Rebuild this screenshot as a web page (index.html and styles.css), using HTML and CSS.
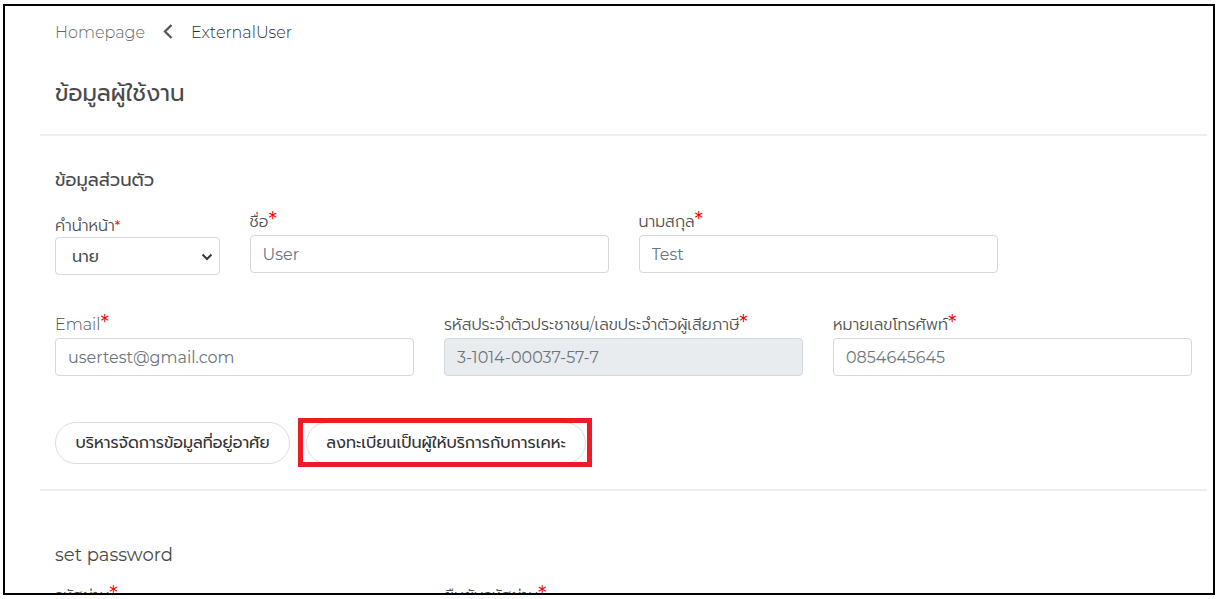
FILE: index.html
```html
<!DOCTYPE html>
<html lang="th">
<head>
<meta charset="utf-8">
<meta name="viewport" content="width=device-width, initial-scale=1">
<title>ExternalUser</title>
<link rel="stylesheet" href="styles.css">
</head>
<body>
<main class="frame">
  <nav class="breadcrumb" aria-label="Breadcrumb">
    <a class="crumb" href="#">Homepage</a>
    <svg class="crumb-arrow" viewBox="0 0 10 16" aria-hidden="true"><path d="M8.500 1 2 7.500l6.500 6.500"/></svg>
    <a class="crumb crumb-current" href="#" aria-current="page">ExternalUser</a>
  </nav>
  <h1 class="page-title">ข้อมูลผู้ใช้งาน</h1>
  <hr class="divider">
  <form class="form">
    <h2 class="section-title">ข้อมูลส่วนตัว</h2>
    <div class="row row-names">
      <div class="field field-small">
        <label class="label label-select" for="prefix">คำนำหน้า<span class="star star-small">*</span></label>
        <div class="select-box">
          <select class="control select" id="prefix"><option>นาย</option></select>
          <svg class="select-arrow" viewBox="0 0 12 8" aria-hidden="true"><path d="M1.500 1.500 6 6l4.500-4.500"/></svg>
        </div>
      </div>
      <div class="field">
        <label class="label" for="first">ชื่อ<span class="star">*</span></label>
        <input class="control" id="first" type="text" value="User">
      </div>
      <div class="field">
        <label class="label" for="last">นามสกุล<span class="star">*</span></label>
        <input class="control" id="last" type="text" value="Test">
      </div>
    </div>
    <div class="row row-contact">
      <div class="field">
        <label class="label" for="email">Email<span class="star">*</span></label>
        <input class="control" id="email" type="email" value="usertest@gmail.com">
      </div>
      <div class="field">
        <label class="label" for="card">รหัสประจำตัวประชาชน/เลขประจำตัวผู้เสียภาษี<span class="star">*</span></label>
        <input class="control" id="card" type="text" value="3-1014-00037-57-7" disabled>
      </div>
      <div class="field">
        <label class="label" for="phone">หมายเลขโทรศัพท์<span class="star">*</span></label>
        <input class="control" id="phone" type="tel" value="0854645645">
      </div>
    </div>
    <div class="actions">
      <button class="pill" type="button">บริหารจัดการข้อมูลที่อยู่อาศัย</button>
      <div class="marked">
        <button class="pill pill-wide" type="button">ลงทะเบียนเป็นผู้ให้บริการกับการเคหะ</button>
      </div>
    </div>
  </form>
  <hr class="divider">
  <form class="form">
    <h2 class="section-title section-password">set password</h2>
    <div class="row">
      <div class="field">
        <label class="label" for="password">รหัสผ่าน<span class="star">*</span></label>
        <input class="control" id="password" type="password">
      </div>
      <div class="field">
        <label class="label" for="confirm">ยืนยันรหัสผ่าน<span class="star">*</span></label>
        <input class="control" id="confirm" type="password">
      </div>
    </div>
  </form>
</main>
</body>
</html>
```
FILE: styles.css
```css
* {
  box-sizing: border-box;
}

body {
  margin: 0;
  padding: 4px 5px 4px 3px;
  height: 100vh;
  overflow: hidden;
  background: #fff;
  color: #555;
  font-family: Montserrat, Prompt, Inter, "Noto Sans Thai", "Noto Sans", sans-serif;
  font-size: 16px;
}

.frame {
  height: 100%;
  overflow: hidden;
  border: 2px solid #000;
  padding: 16px 6px 0 35px;
}

.breadcrumb {
  display: flex;
  align-items: center;
  height: 20px;
  padding-left: 15px;
}

.crumb {
  color: #666;
  font-size: 16px;
  font-weight: 300;
  text-decoration: none;
}

.crumb-current {
  color: #1f3044;
}

.crumb-arrow {
  width: 10px;
  height: 16px;
  margin: 0 18px;
  fill: none;
  stroke: #555;
  stroke-width: 2.3;
}

.page-title {
  margin: 32px 0 22px;
  padding-left: 15px;
  color: #4a4a4a;
  font-size: 23px;
  font-weight: 400;
  line-height: 38px;
}

.divider {
  height: 2px;
  margin: 0;
  border: 0;
  background: #eee;
}

.form {
  padding: 0 15px;
}

.section-title {
  margin: 32px 0 0;
  color: #4a4a4a;
  font-size: 18px;
  font-weight: 400;
  line-height: 24px;
}

.section-password {
  margin-top: 52px;
  margin-bottom: 18px;
}

.row {
  display: grid;
  grid-template-columns: repeat(12, minmax(0, 1fr));
  column-gap: 30px;
}

.row-names {
  margin-top: 19px;
}

.row-contact {
  margin-top: 39px;
}

.field {
  grid-column: span 4;
  display: flex;
  flex-direction: column;
}

.field-small {
  grid-column: span 2;
  padding-top: 2px;
}

.label {
  display: flex;
  height: 24px;
  color: #505050;
  font-size: 16px;
  font-weight: 300;
  line-height: 22px;
  white-space: nowrap;
}

.label-select {
  line-height: 26px;
}

.star {
  color: #f00;
  font-size: 22px;
  font-weight: 400;
  line-height: 20px;
}

.star-small {
  font-size: 14px;
  line-height: 26px;
}

.control {
  width: 100%;
  height: 38px;
  padding: 0 12px;
  border: 1px solid #d3d8dd;
  border-radius: 4px;
  background: #fff;
  color: #6c757d;
  font: inherit;
}

.control:disabled {
  background: #e9ecef;
}

.select-box {
  position: relative;
}

.select {
  padding: 0 30px 0 16px;
  color: #495057;
  appearance: none;
}

.select-arrow {
  position: absolute;
  top: 16px;
  right: 7px;
  width: 12px;
  height: 8px;
  fill: none;
  stroke: #343a40;
  stroke-width: 2;
  pointer-events: none;
}

.actions {
  display: flex;
  gap: 16px;
  margin: 46px 0 25px;
}

.pill {
  min-width: 235px;
  height: 42px;
  padding: 0 19px;
  border: 1px solid #ddd;
  border-radius: 21px;
  background: #fff;
  color: #333;
  font: inherit;
  white-space: nowrap;
}

.pill-wide {
  min-width: 280px;
}

.marked {
  position: relative;
}

.marked::after {
  content: "";
  position: absolute;
  inset: -4px -6px -3px -8px;
  border: 5px solid #ed1c24;
  pointer-events: none;
}
```
